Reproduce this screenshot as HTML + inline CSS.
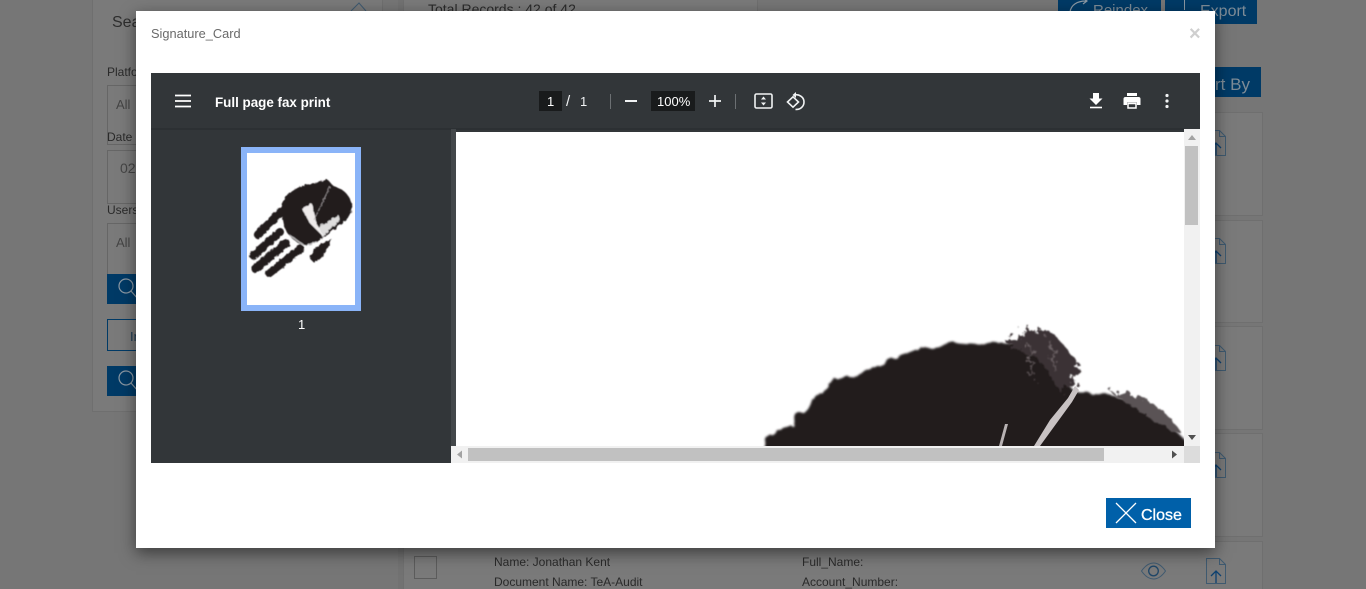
<!DOCTYPE html>
<html lang="en">
<head>
<meta charset="utf-8">
<title>Signature_Card</title>
<style>
html,body{margin:0;padding:0;width:1366px;height:589px;overflow:hidden;background:#767676;font-family:"Liberation Sans",sans-serif;}
#w{position:relative;width:1366px;height:589px;overflow:hidden;background:#767676;}
.a{position:absolute;box-sizing:border-box;}
.t{position:absolute;white-space:nowrap;}
.bg{color:#2a2a2a;font-size:12px;}
.card{position:absolute;left:1150px;width:111px;background:#7a7a7a;border:1px solid #6f6f6f;}
.inp{position:absolute;left:107px;width:120px;background:#7a7a7a;border:1px solid #666;color:#454545;font-size:13px;}
.blue{position:absolute;background:#003a66;color:#7d8b96;}
</style>
</head>
<body>
<div id="w">
<!-- dimmed background page -->
<div class="a" style="left:92px;top:-4px;width:291px;height:416px;background:#7a7a7a;border:1px solid #6f6f6f;"></div>
<div class="a" style="left:398px;top:-4px;width:5px;height:600px;background:#727272;"></div>
<div class="a" style="left:403px;top:-4px;width:355px;height:20px;background:#7a7a7a;border:1px solid #6f6f6f;"></div>
<div class="t" style="left:112px;top:14px;font-size:16px;color:#2e2e2e;">Sea</div>
<svg class="a" style="left:345px;top:0;" width="24" height="18" viewBox="0 0 24 18"><path d="M6 11 L14 3 L21 11" fill="none" stroke="#3f5a70" stroke-width="1"/></svg>
<div class="t bg" style="left:107px;top:65px;">Platfo</div>
<div class="inp" style="top:85px;height:36px;padding:11px 8px;">All</div>
<div class="t bg" style="left:107px;top:130px;">Date</div>
<div class="inp" style="top:150px;height:34px;padding:9px 12px;font-size:14px;">02</div>
<div class="t bg" style="left:107px;top:203px;">Users</div>
<div class="inp" style="top:223px;height:36px;padding:11px 8px;">All</div>
<div class="blue" style="left:107px;top:274px;width:60px;height:30px;"></div>
<svg class="a" style="left:114px;top:276px;" width="30" height="26" viewBox="0 0 30 26"><circle cx="12" cy="10" r="7" fill="none" stroke="#8a97a2" stroke-width="1.2"/><path d="M17 15 L24 23" stroke="#8a97a2" stroke-width="1.2"/></svg>
<div class="a" style="left:107px;top:319px;width:60px;height:32px;border:1px solid #003a66;"></div>
<div class="t" style="left:130px;top:329px;font-size:13px;color:#1d3a52;">In</div>
<div class="blue" style="left:107px;top:366px;width:60px;height:30px;"></div>
<svg class="a" style="left:114px;top:368px;" width="30" height="26" viewBox="0 0 30 26"><circle cx="12" cy="10" r="7" fill="none" stroke="#8a97a2" stroke-width="1.2"/><path d="M17 15 L24 23" stroke="#8a97a2" stroke-width="1.2"/></svg>

<div class="t" style="left:428px;top:1px;font-size:14px;color:#2a2a2a;">Total Records : 42 of 42</div>
<div class="blue" style="left:1058px;top:-6px;width:103px;height:30px;"></div>
<svg class="a" style="left:1066px;top:0;" width="26" height="12" viewBox="0 0 26 12"><path d="M4 12 C5 5 11 1 20 1 M17 -2 L21 1 L17 4" fill="none" stroke="#8a97a2" stroke-width="1.2"/></svg>
<div class="t" style="left:1093px;top:2px;font-size:15px;color:#7d8b96;">Reindex</div>
<div class="blue" style="left:1165px;top:-6px;width:92px;height:30px;"></div>
<div class="a" style="left:1184px;top:0;width:1px;height:10px;background:#8a97a2;"></div>
<div class="t" style="left:1200px;top:3px;font-size:16px;color:#7d8b96;">Export</div>
<div class="blue" style="left:1190px;top:67px;width:71px;height:30px;"></div>
<div class="t" style="left:1215px;top:75px;font-size:17px;color:#7d8b96;">rt By</div>

<div class="card" style="top:112px;height:102px;"></div>
<div class="card" style="top:220px;height:101px;"></div>
<div class="card" style="top:326px;height:102px;"></div>
<div class="card" style="top:433px;height:102px;"></div>
<div class="card" style="left:403px;width:858px;top:541px;height:60px;"></div>

<svg class="a" style="left:1205px;top:130px;" width="22" height="27" viewBox="0 0 22 27"><use href="#fi"/></svg>
<svg class="a" style="left:1205px;top:238px;" width="22" height="27" viewBox="0 0 22 27"><use href="#fi"/></svg>
<svg class="a" style="left:1205px;top:345px;" width="22" height="27" viewBox="0 0 22 27"><use href="#fi"/></svg>
<svg class="a" style="left:1205px;top:452px;" width="22" height="27" viewBox="0 0 22 27"><use href="#fi"/></svg>
<svg class="a" style="left:1205px;top:558px;" width="22" height="27" viewBox="0 0 22 27">
<defs><g id="fi"><path d="M1.5 .5 H14.5 L20.5 6.5 V25.5 H1.5 Z M14.5 .5 V6.5 H20.5" fill="none" stroke="#3f5a70" stroke-width="1"/><path d="M11 25 V14 M6 18 L11 13 L16 18" fill="none" stroke="#0d4170" stroke-width="1.3"/></g></defs>
<use href="#fi"/></svg>
<svg class="a" style="left:1140px;top:560px;" width="27" height="22" viewBox="0 0 27 22"><path d="M1.5 11 C6 4.5 10 3 13.5 3 S21 4.5 25.5 11 C21 17.5 17 19 13.5 19 S6 17.5 1.5 11 Z" fill="none" stroke="#3f5a70" stroke-width="1"/><circle cx="13.5" cy="11" r="4.8" fill="none" stroke="#1f4668" stroke-width="1.3"/></svg>

<div class="a" style="left:414px;top:556px;width:23px;height:23px;border:1px solid #5c5c5c;"></div>
<div class="t bg" style="left:494px;top:555px;">Name: Jonathan Kent</div>
<div class="t bg" style="left:494px;top:575px;">Document Name: TeA-Audit</div>
<div class="t bg" style="left:802px;top:555px;">Full_Name:</div>
<div class="t bg" style="left:802px;top:575px;">Account_Number:</div>

<!-- modal -->
<div class="a" style="left:136px;top:11px;width:1079px;height:537px;background:#fff;box-shadow:0 5px 15px rgba(0,0,0,.5);"></div>
<div class="t" style="left:151px;top:26px;font-size:12.8px;color:#6a6a6a;">Signature_Card</div>
<div class="t" style="left:1189px;top:24px;font-size:20px;line-height:20px;font-weight:bold;color:#cfcfcf;">×</div>

<!-- viewer -->
<div class="a" style="left:151px;top:73px;width:1049px;height:390px;background:#323639;"></div>
<div class="a" style="left:151px;top:128px;width:1033px;height:2px;background:#2c3033;"></div>
<div class="a" style="left:451px;top:129px;width:5px;height:317px;background:#43474a;"></div>

<svg class="a" style="left:175px;top:94px;" width="16" height="14" viewBox="0 0 16 14"><path d="M0 1.500 H16 M0 7 H16 M0 12.500 H16" stroke="#fff" stroke-width="1.800"/></svg>
<div class="t" style="left:215px;top:95px;font-size:13.4px;font-weight:bold;color:#fff;">Full page fax print</div>

<div class="a" style="left:539px;top:91px;width:23px;height:20px;background:#191b1c;"></div>
<div class="t" style="left:547px;top:94px;font-size:13px;color:#fff;">1</div>
<div class="t" style="left:566px;top:93px;font-size:15px;color:#f1f3f4;">/</div>
<div class="t" style="left:580px;top:94px;font-size:13px;color:#f1f3f4;">1</div>
<div class="a" style="left:610px;top:94px;width:1px;height:15px;background:#6c7073;"></div>
<div class="a" style="left:625px;top:100px;width:12px;height:2px;background:#f1f3f4;"></div>
<div class="a" style="left:651px;top:91px;width:44px;height:20px;background:#191b1c;"></div>
<div class="t" style="left:657px;top:94px;font-size:13px;color:#fff;">100%</div>
<svg class="a" style="left:709px;top:95px;" width="12" height="12" viewBox="0 0 12 12"><path d="M0 6 H12 M6 0 V12" stroke="#f1f3f4" stroke-width="1.700"/></svg>
<div class="a" style="left:735px;top:94px;width:1px;height:15px;background:#6c7073;"></div>
<svg class="a" style="left:754px;top:93px;" width="20" height="16" viewBox="0 0 20 16"><rect x="1" y="1" width="17" height="14" rx="1.500" fill="none" stroke="#f1f3f4" stroke-width="1.600"/><path d="M9.500 3.500 L12 6.500 H7 Z M9.500 12.500 L12 9.500 H7 Z" fill="#f1f3f4"/></svg>
<svg class="a" style="left:786px;top:92px;" width="20" height="20" viewBox="0 0 20 20"><path d="M1.500 10 L7 4.800 L12.500 10 L7 15.200 Z" fill="none" stroke="#f1f3f4" stroke-width="1.600"/><path d="M8 3 C13 1.800 18 5 18 10 C18 14.500 14 18 9.500 17.400" fill="none" stroke="#f1f3f4" stroke-width="1.600"/><path d="M10 0 V6 L6.500 3 Z" fill="#f1f3f4"/></svg>

<svg class="a" style="left:1088px;top:92px;" width="16" height="18" viewBox="0 0 16 18"><path d="M5 1 H11 V6.500 H14.500 L8 13 L1.500 6.500 H5 Z" fill="#fff"/><path d="M2 15.500 H14" stroke="#fff" stroke-width="1.600"/></svg>
<svg class="a" style="left:1123px;top:92px;" width="18" height="18" viewBox="0 0 18 18"><path d="M4 1 H14 V4 H4 Z" fill="#fff"/><path d="M2.500 5 H15.500 A2 2 0 0 1 17.500 7 V13 H14 V10.500 H4 V13 H.5 V7 A2 2 0 0 1 2.500 5 Z" fill="#fff"/><path d="M5 11.500 H13 V16 H5 Z" fill="none" stroke="#fff" stroke-width="1.500"/></svg>
<svg class="a" style="left:1164px;top:93px;" width="6" height="16" viewBox="0 0 6 16"><circle cx="3" cy="2.500" r="1.600" fill="#f1f3f4"/><circle cx="3" cy="8" r="1.600" fill="#f1f3f4"/><circle cx="3" cy="13.500" r="1.600" fill="#f1f3f4"/></svg>

<!-- thumbnail -->
<div class="a" style="left:241px;top:147px;width:120px;height:164px;background:#fff;border:6px solid #8ab4f8;"></div>
<svg class="a" style="left:230px;top:140px;" width="140" height="200" viewBox="0 0 420 600">
<defs>
<filter id="r" x="-10%" y="-10%" width="120%" height="120%"><feTurbulence type="fractalNoise" baseFrequency=".09" numOctaves="2" seed="4"/><feDisplacementMap in="SourceGraphic" scale="9"/><feGaussianBlur stdDeviation="1.400"/></filter>
</defs>
<g filter="url(#r)">
<g fill="#241c1f" stroke="#241c1f" stroke-linecap="round">
<path d="M155 192 C165 170 185 150 215 138 C245 128 270 128 290 118 C300 122 303 135 315 140 C345 148 365 175 367 200 C365 225 345 245 325 258 C300 275 285 295 262 305 C245 315 225 320 210 312 C190 300 170 285 162 255 C158 235 155 215 155 192 Z" stroke="none"/>
<path d="M84 284 L150 218" stroke-width="25" fill="none"/>
<path d="M70 346 L150 276" stroke-width="24" fill="none"/>
<path d="M76 386 L168 310" stroke-width="25" fill="none"/>
<path d="M118 400 L212 326" stroke-width="23" fill="none"/>
<path d="M242 358 C240 335 265 310 305 297 C295 325 275 365 250 366 Z" stroke="none"/>
</g>
<path d="M215 205 L245 190 L262 255 L280 290 L240 250 Z" fill="#eeeaea"/>
<path d="M264 262 L300 240 L325 225 L332 240 L305 262 L278 292 Z" fill="#fff" opacity=".85"/>
<path d="M300 140 L252 240" stroke="#aaa4a6" stroke-width="2" fill="none"/>
<path d="M178 285 L225 318 L262 305" stroke="#fff" stroke-width="4" fill="none" opacity=".7"/>
</g>
</svg>
<div class="t" style="left:298px;top:317px;font-size:13px;color:#fff;">1</div>

<!-- main page -->
<div class="a" style="left:456px;top:132px;width:728px;height:314px;background:#fff;overflow:hidden;">
<svg class="a" style="left:0;top:0;" width="728" height="314" viewBox="456 132 728 314">
<defs>
<filter id="b" x="-5%" y="-5%" width="110%" height="110%"><feTurbulence type="fractalNoise" baseFrequency=".07" numOctaves="3" seed="7"/><feDisplacementMap in="SourceGraphic" scale="9"/><feGaussianBlur stdDeviation="1"/></filter>
<filter id="c" x="-20%" y="-20%" width="140%" height="140%"><feTurbulence type="fractalNoise" baseFrequency=".16" numOctaves="3" seed="2"/><feDisplacementMap in="SourceGraphic" scale="22"/><feGaussianBlur stdDeviation=".9"/></filter>
</defs>
<path d="M761 450 L776 430 L793 425 L796 415 L818 394 L836 380 L866 370 L915 350 L958 343 L985 345 L1010 342 L1040 345 L1060 375 L1075 392 L1110 394 L1140 402 L1165 420 L1190 445 V460 H761 Z" fill="#241c1f" filter="url(#b)"/>
<path d="M1005 345 L1030 330 L1052 332 L1068 350 L1080 365 L1072 385 L1060 392 L1040 360 Z" fill="#3b3234" filter="url(#c)"/>
<path d="M1110 392 L1140 396 L1165 412 L1186 438 L1170 430 L1140 412 Z" fill="#5a5254" filter="url(#c)"/>
<path d="M1075 386 L1068 398 L1050 420 L1034 446 L1040 446 L1056 424 L1072 402 L1079 390 Z" fill="#c8c2c3"/>
<path d="M1005 424 L999 446 L1002 446 L1008 424 Z" fill="#b8b2b3"/>
<path d="M1030 345 L1032 378 M1050 340 L1056 372" stroke="#6d6466" stroke-width="2" fill="none" filter="url(#c)"/>
</svg>
</div>

<!-- scrollbars -->
<div class="a" style="left:1184px;top:129px;width:16px;height:317px;background:#f1f1f1;"></div>
<div class="a" style="left:1185px;top:146px;width:13px;height:79px;background:#c1c1c1;"></div>
<svg class="a" style="left:1184px;top:129px;" width="16" height="317" viewBox="0 0 16 317"><path d="M8 6 L12 11 H4 Z" fill="#a3a3a3"/><path d="M8 311 L12 306 H4 Z" fill="#505050"/></svg>
<div class="a" style="left:451px;top:446px;width:733px;height:17px;background:#f1f1f1;"></div>
<div class="a" style="left:468px;top:448px;width:636px;height:13px;background:#c1c1c1;"></div>
<svg class="a" style="left:451px;top:446px;" width="733" height="17" viewBox="0 0 733 17"><path d="M6 8.500 L11 4.500 V12.500 Z" fill="#a3a3a3"/><path d="M726 8.500 L721 4.500 V12.500 Z" fill="#505050"/></svg>
<div class="a" style="left:1184px;top:446px;width:16px;height:17px;background:#dcdcdc;"></div>

<!-- close -->
<div class="a" style="left:1106px;top:498px;width:85px;height:30px;background:#0060a9;"></div>
<svg class="a" style="left:1115px;top:502px;" width="22" height="22" viewBox="0 0 22 22"><path d="M1 1 L21 21 M21 1 L1 21" stroke="#fff" stroke-width="1.300"/></svg>
<div class="t" style="left:1141px;top:507px;font-size:16px;color:#fff;-webkit-text-stroke:.3px #fff;">Close</div>
</div>
</body>
</html>
